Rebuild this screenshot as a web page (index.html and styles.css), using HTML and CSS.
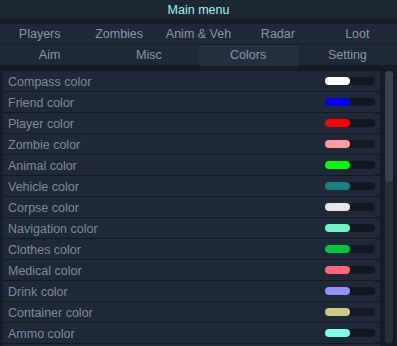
FILE: index.html
```html
<!DOCTYPE html>
<html lang="en">
<head>
  <meta charset="UTF-8">
  <meta name="viewport" content="width=device-width, initial-scale=1.0">
  <title>Main menu</title>
  <link rel="stylesheet" href="styles.css">
</head>
<body>
  <div class="menu">
    <div class="title-bar">Main menu</div>

    <div class="tabs tabs-top">
      <div class="tab">Players</div>
      <div class="tab">Zombies</div>
      <div class="tab">Anim &amp; Veh</div>
      <div class="tab">Radar</div>
      <div class="tab">Loot</div>
    </div>
    <div class="tabs tabs-bottom">
      <div class="tab">Aim</div>
      <div class="tab">Misc</div>
      <div class="tab active">Colors</div>
      <div class="tab">Setting</div>
    </div>

    <div class="content">
      <div class="color-list">
        <div class="color-row"><span class="label">Compass color</span><div class="track"><div class="fill" style="background:#ffffff"></div></div></div>
        <div class="color-row"><span class="label">Friend color</span><div class="track"><div class="fill" style="background:#0000ff"></div></div></div>
        <div class="color-row"><span class="label">Player color</span><div class="track"><div class="fill" style="background:#ff0000"></div></div></div>
        <div class="color-row"><span class="label">Zombie color</span><div class="track"><div class="fill" style="background:#ff9a9a"></div></div></div>
        <div class="color-row"><span class="label">Animal color</span><div class="track"><div class="fill" style="background:#00ff00"></div></div></div>
        <div class="color-row"><span class="label">Vehicle color</span><div class="track"><div class="fill" style="background:#1d8080"></div></div></div>
        <div class="color-row"><span class="label">Corpse color</span><div class="track"><div class="fill" style="background:#e6e6e6"></div></div></div>
        <div class="color-row"><span class="label">Navigation color</span><div class="track"><div class="fill" style="background:#6ff5c3"></div></div></div>
        <div class="color-row"><span class="label">Clothes color</span><div class="track"><div class="fill" style="background:#00c83c"></div></div></div>
        <div class="color-row"><span class="label">Medical color</span><div class="track"><div class="fill" style="background:#ff6478"></div></div></div>
        <div class="color-row"><span class="label">Drink color</span><div class="track"><div class="fill" style="background:#9690ff"></div></div></div>
        <div class="color-row"><span class="label">Container color</span><div class="track"><div class="fill" style="background:#cdc882"></div></div></div>
        <div class="color-row"><span class="label">Ammo color</span><div class="track"><div class="fill" style="background:#7cffe6"></div></div></div>
        <div class="color-row"></div>
      </div>
      <div class="scrollbar">
        <div class="thumb"></div>
      </div>
    </div>
  </div>
</body>
</html>
```

FILE: styles.css
```css
body {
  margin: 0;
  padding: 0;
  background: #151c26;
  font-family: 'Liberation Sans', Arial, sans-serif;
  font-size: 12px;
  overflow: hidden;
}

.menu {
  width: 397px;
  height: 346px;
  overflow: hidden;
}

.title-bar {
  height: 19px;
  line-height: 20px;
  text-align: center;
  background: #1d2633;
  color: #a3f2f0;
  font-size: 12.5px;
  margin-bottom: 5px;
}

.tabs {
  display: grid;
  height: 20px;
  background: #1f2836;
}

.tabs-top {
  grid-template-columns: repeat(5, 1fr);
  border-bottom: 1px solid #161d27;
}

.tabs-bottom {
  grid-template-columns: repeat(4, 1fr);
  margin-bottom: 6px;
}

.tab {
  text-align: center;
  line-height: 21px;
  color: #8a97a6;
  font-size: 12.5px;
}

.tab.active {
  background: #243040;
}

.content {
  display: flex;
  height: 275px;
}

.color-list {
  width: 377px;
  margin-left: 3px;
  overflow: hidden;
}

.color-row {
  display: flex;
  align-items: center;
  height: 20px;
  background: #1f2836;
  border-bottom: 1px solid #131a23;
}

.label {
  padding-left: 5px;
  padding-top: 2px;
  color: #7f8b99;
  font-size: 12.5px;
}

.track {
  margin-left: auto;
  margin-right: 5px;
  width: 50px;
  height: 8px;
  border-radius: 4px;
  background: #111822;
}

.fill {
  width: 25px;
  height: 8px;
  border-radius: 4px;
}

.scrollbar {
  width: 8px;
  margin-left: 5px;
  height: 272px;
  border-radius: 4px;
  background: #252f3c;
}

.thumb {
  height: 111px;
  border-radius: 4px;
  background: #374252;
}
```
